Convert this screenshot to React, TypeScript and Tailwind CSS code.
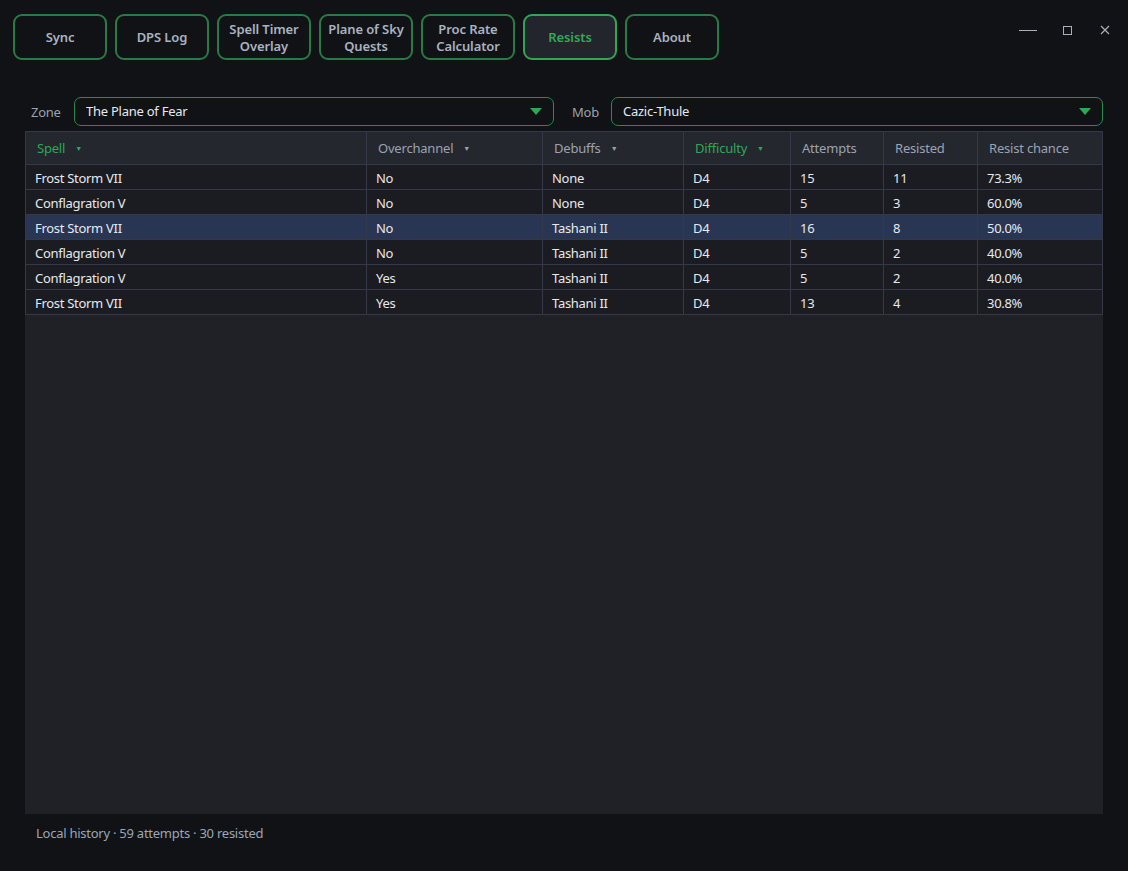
import { useState } from "react";

const tabs = [
  ["Sync"],
  ["DPS Log"],
  ["Spell Timer", "Overlay"],
  ["Plane of Sky", "Quests"],
  ["Proc Rate", "Calculator"],
  ["Resists"],
  ["About"],
];

const columns = [
  { label: "Spell", w: "w-[340px]", sort: true, active: true },
  { label: "Overchannel", w: "w-[176px]", sort: true, active: false },
  { label: "Debuffs", w: "w-[141px]", sort: true, active: false },
  { label: "Difficulty", w: "w-[107px]", sort: true, active: true },
  { label: "Attempts", w: "w-[93px]", sort: false, active: false },
  { label: "Resisted", w: "w-[94px]", sort: false, active: false },
  { label: "Resist chance", w: "flex-1", sort: false, active: false },
];

const rows = [
  ["Frost Storm VII", "No", "None", "D4", "15", "11", "73.3%"],
  ["Conflagration V", "No", "None", "D4", "5", "3", "60.0%"],
  ["Frost Storm VII", "No", "Tashani II", "D4", "16", "8", "50.0%"],
  ["Conflagration V", "No", "Tashani II", "D4", "5", "2", "40.0%"],
  ["Conflagration V", "Yes", "Tashani II", "D4", "5", "2", "40.0%"],
  ["Frost Storm VII", "Yes", "Tashani II", "D4", "13", "4", "30.8%"],
];

function Caret() {
  return (
    <svg width={12} height={7} viewBox="0 0 12 7" className="shrink-0">
      <path d="M0 0h12L6 7z" fill="#2fa854" />
    </svg>
  );
}

function Select({ value, className }: { value: string; className: string }) {
  return (
    <div
      className={`flex items-center h-[29px] px-[11px] rounded-[7px] border border-[#2a8a48] bg-[#111216] ${className}`}
    >
      <span className="flex-1 pt-px text-[13px] tracking-[-0.25px] text-[#e6e9ee] truncate">{value}</span>
      <Caret />
    </div>
  );
}

export default function App() {
  const [selected, setSelected] = useState(2);

  return (
    <div
      className="w-[1128px] h-[871px] bg-[#111216] flex flex-col overflow-hidden text-[#e3e6eb]"
      style={{ fontFamily: '"Noto Sans", "Open Sans", sans-serif' }}
    >
      {/* Top tabs + window controls */}
      <div className="flex items-start pl-[13px] pt-[14px]">
        <div className="flex gap-2">
          {tabs.map((t) => {
            const active = t[0] === "Resists";
            return (
              <button
                key={t[0]}
                className={`w-[94px] h-[46px] rounded-[9px] border-2 flex flex-col items-center justify-center pt-px text-[13px] font-semibold leading-[17px] tracking-[-0.1px] ${
                  active
                    ? "border-[#35a356] bg-[#22252c] text-[#34a85a]"
                    : "border-[#2a7a44] bg-[#111216] text-[#a9b3c1]"
                }`}
              >
                {t.map((l) => (
                  <span key={l}>{l}</span>
                ))}
              </button>
            );
          })}
        </div>
        <div className="ml-auto flex items-center h-[32px] pr-[18px] gap-[22px]">
          <div className="w-[18px] h-px bg-[#a9b0bc]" />
          <div className="w-[9px] h-[9px] border border-[#a9b0bc] ml-[4px]" />
          <svg width={10} height={10} viewBox="0 0 10 10" className="ml-[6px]">
            <path d="M1 1L9 9M9 1L1 9" stroke="#a9b0bc" strokeWidth={1.2} />
          </svg>
        </div>
      </div>

      {/* Zone / Mob filters */}
      <div className="flex items-center mt-[37px] pl-[31px] pr-[25px]">
        <span className="text-[13px] tracking-[-0.25px] text-[#9aa3b0] w-[43px] pt-[2px]">Zone</span>
        <Select value="The Plane of Fear" className="w-[480px]" />
        <span className="text-[13px] tracking-[-0.25px] text-[#9aa3b0] ml-[18px] w-[39px] pt-[2px]">Mob</span>
        <Select value="Cazic-Thule" className="flex-1" />
      </div>

      {/* Table */}
      <div className="mx-[25px] mt-[5px] h-[683px] bg-[#202126] flex flex-col">
        <div className="flex h-[34px] bg-[#25272f] border border-[#343848]">
          {columns.map((c, i) => (
            <div
              key={c.label}
              className={`${c.w} flex items-center gap-[10px] px-[11px] pt-[2px] text-[13px] tracking-[-0.2px] ${
                i > 0 ? "border-l border-[#343848]" : ""
              } ${c.active ? "text-[#2fa854]" : "text-[#9aa3b2]"}`}
            >
              <span>{c.label}</span>
              {c.sort && (
                <span className={`text-[7px] ${c.active ? "text-[#2fa854]" : "text-[#9aa3b2]"}`}>▼</span>
              )}
            </div>
          ))}
        </div>
        {rows.map((r, ri) => (
          <div
            key={ri}
            onClick={() => setSelected(ri)}
            className={`flex h-[25px] border-x border-b border-[#343848] ${
              ri === selected ? "bg-[#283654]" : "bg-[#1b1c21]"
            }`}
          >
            {r.map((cell, ci) => (
              <div
                key={ci}
                className={`${columns[ci].w} flex items-center px-[9px] pt-[3px] text-[13px] tracking-[-0.3px] text-[#e6e9ee] ${
                  ci > 0 ? "border-l border-[#343848]" : ""
                }`}
              >
                {cell}
              </div>
            ))}
          </div>
        ))}
      </div>

      {/* Footer */}
      <div className="pl-[36px] mt-[10px] text-[13px] tracking-[-0.25px] text-[#9aa6b5]">
        Local history · 59 attempts · 30 resisted
      </div>
    </div>
  );
}
